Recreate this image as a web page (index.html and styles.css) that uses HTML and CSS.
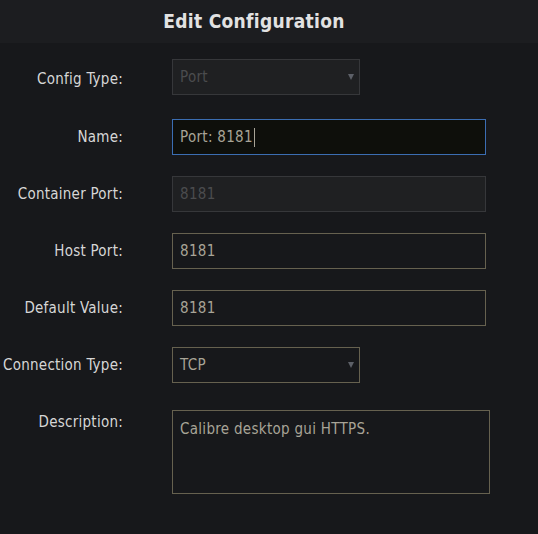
FILE: index.html
```html
<!DOCTYPE html>
<html lang="en">
<head>
    <meta charset="UTF-8">
    <meta name="viewport" content="width=device-width, initial-scale=1.0">
    <title>Edit Configuration</title>
    <link rel="stylesheet" href="styles.css">
</head>
<body>
    <div id="dialog">
        <div id="dialog-title">Edit Configuration</div>

        <form id="config-form">
            <label class="label">Config Type:</label>
            <div class="field select disabled">
                <span>Port</span>
                <span class="caret"></span>
            </div>

            <label class="label">Name:</label>
            <div class="field wide focused">
                <span>Port: 8181</span><span class="text-cursor"></span>
            </div>

            <label class="label">Container Port:</label>
            <div class="field wide disabled">
                <span>8181</span>
            </div>

            <label class="label">Host Port:</label>
            <div class="field wide">
                <span>8181</span>
            </div>

            <label class="label">Default Value:</label>
            <div class="field wide">
                <span>8181</span>
            </div>

            <label class="label">Connection Type:</label>
            <div class="field select">
                <span>TCP</span>
                <span class="caret"></span>
            </div>

            <label class="label top">Description:</label>
            <div class="field textarea">Calibre desktop gui HTTPS.</div>
        </form>
    </div>
</body>
</html>
```

FILE: styles.css
```css
* {
    margin: 0;
    padding: 0;
    box-sizing: border-box;
}

html, body {
    height: 100%;
    width: 100%;
    overflow: hidden;
    background: #17181b;
    font-family: "DejaVu Sans Condensed", "DejaVu Sans", sans-serif;
}

#dialog {
    width: 100%;
}

#dialog-title {
    height: 43px;
    line-height: 43px;
    padding-right: 30px;
    text-align: center;
    background: #1c1d20;
    color: #e2e2e2;
    font-size: 19px;
    font-weight: bold;
    letter-spacing: 0.3px;
}

#config-form {
    display: grid;
    grid-template-columns: 123px auto;
    column-gap: 49px;
    row-gap: 21px;
    align-items: center;
    justify-items: start;
    padding-top: 16px;
}

.label {
    justify-self: end;
    font-size: 15px;
    letter-spacing: 0.25px;
    color: #d6d6d6;
}

.label.top {
    align-self: start;
    margin-top: 9px;
}

.field {
    height: 36px;
    display: flex;
    align-items: center;
    padding: 0 7px;
    border: 1px solid #66614f;
    color: #a8a497;
    font-size: 15px;
    letter-spacing: 0.3px;
    white-space: nowrap;
}

.field.select {
    width: 188px;
    justify-content: space-between;
    padding-right: 5px;
}

.field.wide {
    width: 314px;
}

.field.disabled {
    background: #1f2022;
    border-color: #36373a;
    color: #4b4c4e;
}

.field.focused {
    background: #0e0f0b;
    border-color: #3b6db2;
}

/* config type row sits a little higher than the rest */
.field.select.disabled {
    margin-bottom: 3px;
}

.field.textarea {
    width: 318px;
    height: 84px;
    align-items: flex-start;
    padding-top: 9px;
    margin-top: 6px;
}

.caret {
    width: 0;
    height: 0;
    border-left: 3px solid transparent;
    border-right: 3px solid transparent;
    border-top: 6px solid #5d6068;
}

.text-cursor {
    width: 1px;
    height: 19px;
    margin-left: 1px;
    background: #a8a497;
}
```
